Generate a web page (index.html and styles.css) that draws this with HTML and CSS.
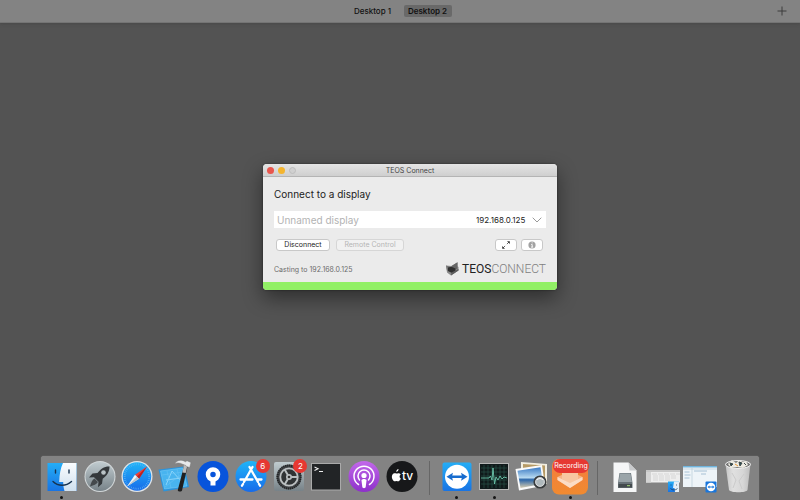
FILE: index.html
```html
<!DOCTYPE html>
<html lang="en">
<head>
<meta charset="utf-8">
<title>TEOS Connect</title>
<link rel="stylesheet" href="styles.css">
</head>
<body>
<nav class="spaces">
  <div class="spaces-list">
    <button class="space">Desktop 1</button>
    <button class="space space-active">Desktop 2</button>
  </div>
  <button class="add-space" aria-label="Add desktop">
    <svg width="10" height="10" viewBox="0 0 10 10"><path d="M5 .5v9M.5 5h9" stroke="#3c3c3c" fill="none"/></svg>
  </button>
</nav>

<main class="desktop">
  <section class="window">
    <header class="titlebar">
      <div class="lights"><span class="light close"></span><span class="light minimize"></span><span class="light zoom"></span></div>
      <span class="title">TEOS Connect</span>
    </header>
    <div class="content">
      <h1 class="heading"><label for="display">Connect to a display</label></h1>
      <div class="field">
        <input class="display-name" id="display" type="text" placeholder="Unnamed display">
        <select class="address" aria-label="Address"><option>192.168.0.125</option></select>
        <svg class="chevron" width="10" height="6" viewBox="0 0 10 6"><path d="M.7.7 5 5 9.3.7" fill="none" stroke="#999"/></svg>
      </div>
      <div class="actions">
        <button class="btn disconnect">Disconnect</button>
        <button class="btn remote" disabled>Remote Control</button>
        <button class="btn icon-btn expand" aria-label="Full screen">
          <svg width="10" height="10" viewBox="0 0 10 10"><path d="M5.900 4.100 8 2M4.100 5.900 2 8" stroke="#555" stroke-width=".9"/><path d="M6 1.200h2.800V4zM1.200 6v2.800H4z" fill="#333"/></svg>
        </button>
        <button class="btn icon-btn" aria-label="Information">
          <svg width="8" height="8" viewBox="0 0 8 8"><circle cx="4" cy="4" r="3.600" fill="#a2a2a2"/><path d="M3.200 3.500h1v2.600M3 6.100h2.200M3.700 1.900h.9" stroke="#fff" stroke-width=".9" fill="none"/></svg>
        </button>
      </div>
      <div class="status">
        <span class="casting">Casting to 192.168.0.125</span>
        <span class="brand">
          <svg width="13" height="14" viewBox="0 0 13 14"><path d="M0 3.500 5.500 4 11.500.3v4l1 .7v3.500L5 13.500 1 10.500z" fill="#8a8a8a"/><path d="M0 3.500 4 5v5L1 8.500z" fill="#777"/><path d="M5.500 4 11.500.3v6.200L8 8z" fill="#666"/><path d="m2 5.500 3.500-.8 4 1.800v3L6 11 2 9z" fill="#303030"/><path d="M5.500 10.500 12.500 7v1.500L5 13.500z" fill="#5d5d5d"/></svg>
          <span class="brand-name"><b class="brand-strong">TEOS</b>CONNECT</span>
        </span>
      </div>
    </div>
    <div class="progress"></div>
  </section>
</main>

<svg class="defs" width="0" height="0" aria-hidden="true">
  <defs>
    <linearGradient id="blue" x2="0" y2="1"><stop stop-color="#20b5f8"/><stop offset="1" stop-color="#176bea"/></linearGradient>
    <linearGradient id="finder" x2="0" y2="1"><stop stop-color="#24adf6"/><stop offset="1" stop-color="#1874e4"/></linearGradient>
    <linearGradient id="face" x2="0" y2="1"><stop stop-color="#fafcfe"/><stop offset="1" stop-color="#cfe0ef"/></linearGradient>
    <linearGradient id="steel" x2="0" y2="1"><stop stop-color="#c0cbcf"/><stop offset="1" stop-color="#778288"/></linearGradient>
    <linearGradient id="purple" x2="0" y2="1"><stop stop-color="#c268ea"/><stop offset="1" stop-color="#8d30ca"/></linearGradient>
    <linearGradient id="orange" x2="0" y2="1"><stop stop-color="#f47d40"/><stop offset="1" stop-color="#f08a30"/></linearGradient>
    <linearGradient id="bin" x2="1" y2="0"><stop stop-color="#c4c4c4"/><stop offset=".3" stop-color="#e0e0e0"/><stop offset=".7" stop-color="#d6d6d6"/><stop offset="1" stop-color="#bdbdbd"/></linearGradient>
    <linearGradient id="sky" x2="0" y2="1"><stop stop-color="#3979c3"/><stop offset=".5" stop-color="#b5d8f0"/><stop offset=".6" stop-color="#2b65a8"/><stop offset="1" stop-color="#d8cdb0"/></linearGradient>
  </defs>
</svg>

<footer class="dock">
  <div class="app running">
    <svg class="icon" viewBox="0 0 36 36"><path d="M3.500 4h29v28h-29z" fill="url(#finder)"/><path d="M19 4h13.500v28H20.500c-1-3.500-1.300-6-1.300-9h-4C15.500 15 16.500 9 19 4z" fill="url(#face)"/><path d="M11.500 11v3M25 11v3M9 22.500c5 5 13 5 18.500 0" stroke="#17324f" stroke-width="1.400" fill="none" stroke-linecap="round"/></svg>
  </div>
  <div class="app">
    <svg class="icon" viewBox="0 0 36 36"><circle cx="18" cy="17.500" r="15.500" fill="#d3d8da"/><circle cx="18" cy="17.500" r="14.500" fill="url(#steel)"/><path d="M27.500 7.500c-5-.3-9 2.500-12 6.500l-5 .5-3.500 4 5-.3 4.500 4.500-.5 5.500 4-3.500.7-5c4.300-3 6.800-7 6.800-12.200z" fill="#34383b"/><path d="m12.500 19.500 3.500 3.500c-1.500 2.500-4 3-8 4.500 1.200-4 2-6.500 4.500-8z" fill="#44494c"/><circle cx="21.500" cy="13.500" r="2.300" fill="#b9c2c5"/></svg>
  </div>
  <div class="app">
    <svg class="icon" viewBox="0 0 36 36"><circle cx="18" cy="17.500" r="15.500" fill="#dfe4e8"/><circle cx="18" cy="17.500" r="14.200" fill="url(#blue)"/><circle cx="18" cy="17.500" r="12.300" fill="none" stroke="#5fb4f5" stroke-width="2" stroke-dasharray=".6 1.300"/><path d="M28 7.500 16 15.700l4 4z" fill="#ef3e36"/><path d="m16 15.700 4 4L8 27.500z" fill="#f2f4f5"/><path d="m20 19.700 8-12.200-10 10z" fill="#b92324"/><path d="m20 19.700-2-2-10 9.800z" fill="#b8c3cc"/></svg>
  </div>
  <div class="app">
    <svg class="icon" viewBox="0 0 36 36"><path d="m1.500 10.500 26-3 4.500 20.500-25.500 4.500z" fill="#2b94dc"/><path d="m3.500 12 22-3 4.500 18L7.500 30z" fill="#48b4ef" stroke="#82d0f7" stroke-width=".5"/><path d="m9 26 6-14 10 11M9 21l15-2" stroke="#8bd5fa" fill="none" stroke-width="1"/><path d="M5 16l21-3M8 28l18-14M10 12l4 17M20 10l4 16" stroke="#6dc5f5" fill="none" stroke-width=".5"/><path d="m27 7 3.500.8-5.500 23.700c-.4 1.700-4.500 1.300-4.200-.6z" fill="#202020"/><path d="m27 5.500 3.500.5-1.800 8-3.300-.5z" fill="#bbb"/><path d="M17.500 4.500c3.500-4 7.500-4 11-1.800l1.500-1 4 1.800-1.300 5-3.200-.9-.5-1-4-1.600c-2-1.200-4.500-1.300-7.500-.5z" fill="#e8e9ea" stroke="#777" stroke-width=".5"/></svg>
  </div>
  <div class="app">
    <svg class="icon" viewBox="0 0 36 36"><circle cx="18" cy="17.500" r="15.500" fill="#0754db"/><circle cx="18" cy="15.500" r="5" fill="none" stroke="#fff" stroke-width="4.500"/><path d="M15.500 20h5v6.500h-5z" fill="#fff"/></svg>
  </div>
  <div class="app">
    <svg class="icon" viewBox="0 0 36 36"><circle cx="18" cy="17.500" r="15.500" fill="url(#blue)"/><path d="m19.500 8-8.500 15M16.500 8l8.500 15M7.500 20.500h12M23.500 20.500h5M10 25l-1 1.700M26 25l1 1.700" stroke="#fff" stroke-width="2.300" stroke-linecap="round"/></svg>
    <span class="badge">6</span>
  </div>
  <div class="app">
    <svg class="icon" viewBox="0 0 36 36"><rect x="3" y="3" width="30" height="29" rx="2" fill="url(#steel)"/><circle cx="18" cy="18" r="12.500" fill="#44474a"/><circle cx="18" cy="18" r="11.500" fill="none" stroke="#202224" stroke-width="2" stroke-dasharray="1 1"/><circle cx="18" cy="18" r="8.700" fill="#303335" stroke="#bcc0c2" stroke-width="1.800"/><path d="M18 18h9M18 18l-4.500-7.800M18 18l-4.500 7.800" stroke="#b9bec0" stroke-width="2"/><circle cx="18" cy="18" r="3" fill="#b9bec0"/><circle cx="18" cy="18" r="1.300" fill="#333"/></svg>
    <span class="badge">2</span>
  </div>
  <div class="app">
    <svg class="icon" viewBox="0 0 36 36"><path d="M3 4h30v27.500H3z" fill="#aaa"/><path d="M4 5h28v25.500H4z" fill="#222426"/><path d="m6.500 8 3.500 1.700-3.500 1.700M11 12.500h4" stroke="#eee" stroke-width="1.100" fill="none"/></svg>
  </div>
  <div class="app">
    <svg class="icon" viewBox="0 0 36 36"><circle cx="18" cy="17.500" r="15.500" fill="url(#purple)"/><g fill="none" stroke="#fff" stroke-width="1.500" stroke-linecap="round"><path d="M12.500 25.500a10 10 0 1 1 11 0M13.500 21a6 6 0 1 1 9 0"/></g><circle cx="18" cy="16.500" r="2.600" fill="#fff"/><path d="M15.500 21.500c0-2 5-2 5 0l-.8 6.500c-.2 1.500-3.200 1.500-3.400 0z" fill="#fff"/></svg>
  </div>
  <div class="app">
    <svg class="icon" viewBox="0 0 36 36"><circle cx="18" cy="17.500" r="15.500" fill="#17181a"/><path d="M12.300 13c-.1-1.500 1-2.700 2.200-2.900.1 1.500-.9 2.700-2.200 2.900zm3.300 4.700c0-1.300.8-1.900 1.200-2.200-1.300-1.800-3.200-1.500-4.300-.9-1.100-.5-2-.6-3-.1-2.600 1.500-1.800 6.300.6 7.700.9.300 1.400-.3 2.300-.3s1.500.6 2.400.3c1.100-.6 1.700-1.700 2-2.600-.8-.4-1.200-1.100-1.200-1.900z" fill="#fff"/></svg>
    <span class="tv">tv</span>
  </div>
  <span class="divider"></span>
  <div class="app running">
    <svg class="icon" viewBox="0 0 36 36"><rect x="3.500" y="3.500" width="29" height="28.500" rx="2" fill="url(#finder)"/><circle cx="18" cy="17.700" r="12" fill="#fff"/><path d="m7.500 17.700 6.500-4-.8 2.800h9.600l-.8-2.800 6.500 4-6.500 4 .8-2.800h-9.600l.8 2.800z" fill="#176cce"/></svg>
  </div>
  <div class="app running">
    <svg class="icon" viewBox="0 0 36 36"><path d="M3 4h30v27H3z" fill="#b6b6b6"/><path d="M4 5h28v25H4z" fill="#101a1b"/><path d="M8 6v23M12 6v23M16 6v23M20 6v23M24 6v23M28 6v23M5 9h26M5 13h26M5 17h26M5 21h26M5 25h26" stroke="#29574f" stroke-width=".6"/><path d="M5 19h8l1.500-2 1.500 4 1-12 1.500 16 1.500-7 2 3 2-4 2 3 2-2 3 1" fill="none" stroke="#6cc9ae" stroke-width=".9"/></svg>
  </div>
  <div class="app">
    <svg class="icon" viewBox="0 0 36 36"><path d="m7 3 26 2v20l-26-2z" fill="#f2eee0"/><path d="m9 5 22 1.600v16L9 21z" fill="#b69a65"/><path d="m1.500 10 26.500-4 3 20.500L5 31.500z" fill="#fafafa"/><path d="m3.500 11.700 23-3.500 2.500 16.500L6.500 29z" fill="url(#sky)"/><circle cx="26" cy="23" r="5.800" fill="#7f8b91" stroke="#383b3d" stroke-width="1.600"/><circle cx="26" cy="23" r="4.300" fill="#aeb8bc" stroke="#ddd"/><path d="M23 21c2-2 4-2 6 0" stroke="#fff" fill="none"/></svg>
  </div>
  <div class="app running">
    <svg class="icon" viewBox="0 0 36 36"><rect width="36" height="35.500" rx="7" fill="url(#orange)"/><path d="m5.500 18 12.500-6 12.500 6v3L18 29 5.500 21z" fill="#f8b487"/><path d="M10 11h16v9l-8 4.500-8-4.500z" fill="#f8c7a2"/><path d="m5.500 18 12.500 6 12.500-6v3L18 29 5.500 21z" fill="#fbdcc6"/></svg>
    <span class="recording">Recording</span>
  </div>
  <span class="divider"></span>
  <div class="app">
    <svg class="icon" viewBox="0 0 36 36"><path d="M6.500 3.500h15l8 8V33h-23z" fill="#f5f6f7"/><path d="m21.500 3.500 8 8h-7z" fill="#c9cbcd"/><path d="M12.500 14h11.500l1.500 10v5H11v-5z" fill="#687278"/><path d="M13 14.500h10.500l1.400 8.500H11.600z" fill="#9aa4a9"/><path d="M11.500 25h13.500v3.500H11.500z" fill="#434a4e"/><path d="M20 26.700h3" stroke="#a5d879"/></svg>
  </div>
  <div class="app">
    <svg class="icon" viewBox="0 0 36 36"><path d="M1 11h34v12.500H1z" fill="#eee"/><path d="M1 11h34v2H1z" fill="#c7c7c7"/><path d="M1 15h34M8 17h24M8 19h24M8 21h18" stroke="#ccc" stroke-width=".7" stroke-dasharray="5 1"/><path d="M1 13h5v10.500H1z" fill="#d4d4d4"/><path d="M23 22.500h11V33H23z" fill="url(#finder)"/><path d="M29 22.500h5V33h-4l-.5-4H28z" fill="#e6eff7"/><path d="M25.500 29.500c2 2 5 2 7 0M26 25.500v1M31.500 25.500v1" stroke="#17324f" stroke-width=".7" fill="none"/></svg>
  </div>
  <div class="app">
    <svg class="icon" viewBox="0 0 36 36"><path d="M1 7h34v21H1z" fill="#eef4f8"/><path d="M1 7h34v1.500H1z" fill="#70b4dc"/><path d="M1 10h34M10 9v19" stroke="#b8ccd8" stroke-width=".7"/><path d="M2.500 13h5M2.500 16h6M2.500 19h5M12 12h9M19 15h5M21 12h4" stroke="#95b5cc" stroke-width=".8"/><rect x="23.500" y="22.500" width="11" height="11" rx="1" fill="#1976dc"/><circle cx="29" cy="28" r="4.300" fill="#fff"/><path d="m25.500 28 2-1.500v1h3v-1l2 1.500-2 1.500v-1h-3v1z" fill="#1976dc"/></svg>
  </div>
  <div class="app">
    <svg class="icon" viewBox="0 0 36 36"><path d="m5.500 5 25-.5L27.500 31c-1 3-17 3-18.500 0z" fill="url(#bin)"/><path d="m12 14 4 7-3 8M24 15l-5 7 3 8" stroke="#cbcbcb" fill="none"/><ellipse cx="18" cy="5.500" rx="12.500" ry="4" fill="#777" stroke="#f2f2f2"/><path d="m8 5 4-4 4 3 3-3 4 2 3-1 2 4-5 3-6-1-6 1z" fill="#eceae2"/><path d="m10 4 3 1-2 2zM19 3l3 1-2 3zM24 4l2 2" fill="#2f4f55" stroke="#3d4849"/><path d="m15 5 3 2" stroke="#e99b3b"/></svg>
  </div>
</footer>
</body>
</html>
```
FILE: styles.css
```css
* {
  box-sizing: border-box;
}

body {
  margin: 0;
  min-height: 100vh;
  display: flex;
  flex-direction: column;
  background: #535353;
  color: #222;
  font-family: Inter, "Liberation Sans", sans-serif;
  font-size: 8px;
}

button,
input,
select {
  margin: 0;
  padding: 0;
  border: 0;
  background: none;
  color: inherit;
  font: inherit;
}

.defs {
  position: absolute;
}

/* Spaces bar */
.spaces {
  display: grid;
  grid-template-columns: 1fr auto 1fr;
  align-items: center;
  height: 23px;
  padding: 0 13px;
  background: #838383;
  border-bottom: 1px solid #747474;
  box-shadow: 0 1px 3px #484848;
}

.spaces-list {
  grid-column: 2;
  display: flex;
  gap: 7px;
}

.space {
  width: 48px;
  height: 12px;
  border-radius: 2px;
  color: #111;
  font-weight: 500;
  white-space: nowrap;
}

.space-active {
  background: #696969;
  font-weight: 600;
}

.add-space {
  display: flex;
  justify-self: end;
}

/* Window */
.desktop {
  flex: 1;
  position: relative;
}

.window {
  position: absolute;
  left: 263px;
  top: 141px;
  width: 294px;
  overflow: hidden;
  border-radius: 4px;
  background: #ebebeb;
  box-shadow: 0 8px 20px rgba(0, 0, 0, .45), 0 0 2px rgba(0, 0, 0, .5);
}

.titlebar {
  display: grid;
  grid-template-columns: 1fr auto 1fr;
  align-items: center;
  height: 13px;
  padding: 0 4px;
  background: linear-gradient(#e4e4e4, #cfcfcf);
  border-bottom: 1px solid #b4b4b4;
}

.title {
  color: #444;
  font-size: 7px;
}

.lights {
  display: flex;
  gap: 4px;
}

.light {
  width: 7px;
  height: 7px;
  border-radius: 50%;
}

.close {
  background: #e9564d;
}

.minimize {
  background: #f4b52f;
}

.zoom {
  background: #d0d0d0;
  border: 1px solid #bdbdbd;
}

.content {
  display: flex;
  flex-direction: column;
  padding: 10px 11px 5px;
}

.heading {
  margin: 0 0 10px;
  font-size: 10px;
  font-weight: 400;
  line-height: 14px;
}

.field {
  display: flex;
  align-items: center;
  height: 17px;
  padding: 0 4px 0 3px;
  background: #fff;
}

.display-name {
  flex: 1;
  min-width: 0;
  font-size: 10px;
  outline: 0;
}

.display-name::placeholder {
  color: #b3b3b3;
}

.address {
  appearance: none;
  margin-right: 6px;
}

.actions {
  display: flex;
  gap: 4px;
  padding: 11px 3px 0 2px;
}

.btn {
  height: 12px;
  border: 1px solid #c8c8c8;
  border-radius: 3px;
  background: #fff;
  font-size: 7px;
  line-height: 10px;
  white-space: nowrap;
}

.disconnect {
  width: 54px;
  margin-right: 2px;
}

.remote {
  width: 68px;
  background: #f1f1f1;
  border-color: #d6d6d6;
  color: #b5b5b5;
}

.icon-btn {
  display: flex;
  align-items: center;
  justify-content: center;
  width: 22px;
}

.expand {
  margin-left: auto;
}

.status {
  display: flex;
  align-items: center;
  justify-content: space-between;
  height: 16px;
  margin-top: 10px;
}

.casting {
  color: #6c6c6c;
  font-size: 7px;
}

.brand {
  display: flex;
  align-items: center;
  gap: 3px;
}

.brand-name {
  color: #808080;
  font-family: Roboto, "Liberation Sans", sans-serif;
  font-size: 12px;
  font-weight: 300;
  line-height: 16px;
}

.brand-strong {
  color: #222;
  font-weight: 400;
}

.progress {
  height: 8px;
  background: #91f065;
}

/* Dock */
.dock {
  display: flex;
  height: 44px;
  margin: 0 41px;
  padding: 3px 2px 0;
  border-radius: 3px 3px 0 0;
  background: #838383;
  box-shadow: 0 0 1px #999;
}

.app {
  flex: 1;
  position: relative;
  display: flex;
  justify-content: center;
}

.icon {
  width: 36px;
  height: 36px;
  flex: none;
}

.running::after {
  content: "";
  position: absolute;
  bottom: 1px;
  width: 3px;
  height: 3px;
  border-radius: 50%;
  background: #151515;
}

.divider {
  width: 1px;
  height: 34px;
  margin: 2px 8px;
  background: #666;
}

.badge,
.recording {
  position: absolute;
  top: 0;
  right: 0;
  width: 14px;
  height: 14px;
  border-radius: 7px;
  background: #e63832;
  color: #fff;
  line-height: 14px;
  text-align: center;
}

.recording {
  width: 36px;
  font-size: 7px;
}

.tv {
  position: absolute;
  top: 10px;
  left: 19px;
  color: #fff;
  font-size: 12px;
  font-weight: 500;
  line-height: 14px;
}
```
